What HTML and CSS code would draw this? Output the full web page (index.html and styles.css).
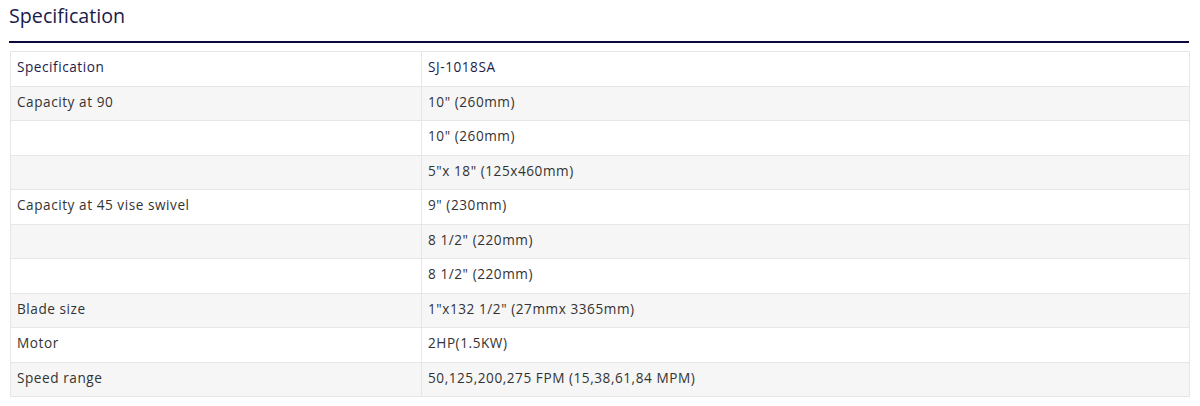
FILE: index.html
```html
<!DOCTYPE html>
<html>
<head>
<meta charset="utf-8">
<link rel="stylesheet" href="styles.css">
</head>
<body>
<div class="spec">
  <h2 class="spec-title">Specification</h2>
  <table class="spec-table">
    <thead>
      <tr><th>Specification</th><th>SJ-1018SA</th></tr>
    </thead>
    <tbody>
      <tr><td>Capacity at 90</td><td>10" (260mm)</td></tr>
      <tr><td></td><td>10" (260mm)</td></tr>
      <tr><td></td><td>5"x 18" (125x460mm)</td></tr>
      <tr><td>Capacity at 45 vise swivel</td><td>9" (230mm)</td></tr>
      <tr><td></td><td>8 1/2" (220mm)</td></tr>
      <tr><td></td><td>8 1/2" (220mm)</td></tr>
      <tr><td>Blade size</td><td>1"x132 1/2" (27mmx 3365mm)</td></tr>
      <tr><td>Motor</td><td>2HP(1.5KW)</td></tr>
      <tr><td>Speed range</td><td>50,125,200,275 FPM (15,38,61,84 MPM)</td></tr>
    </tbody>
  </table>
</div>
</body>
</html>
```
FILE: styles.css
```css
html, body {
  margin: 0;
  padding: 0;
  background: #fff;
}
body {
  font-family: "Open Sans", "DejaVu Sans", sans-serif;
  color: #333;
}
.spec {
  width: 1180px;
  margin-left: 10px;
}
.spec-title {
  margin: 0;
  padding: 3px 0 0 0;
  margin-left: -1px;
  font-size: 19.7px;
  font-weight: 400;
  line-height: 26px;
  color: #1b1b4b;
  border-bottom: 2px solid #0b0b3b;
  padding-bottom: 12px;
  margin-right: 1px;
}
.spec-table {
  margin-top: 8px;
  width: 1180px;
  border-collapse: collapse;
  font-size: 13.6px;
  letter-spacing: 0.55px;
}
.spec-table th,
.spec-table td {
  border: 1px solid #e6e6e6;
  text-align: left;
  font-weight: 400;
  padding: 0 6px 3px;
  height: 30.5px;
  line-height: 18px;
  vertical-align: middle;
}
.spec-table th:first-child,
.spec-table td:first-child {
  width: 398px;
}
.spec-table th {
  color: #1d1d4d;
}
.spec-table tbody tr:nth-child(odd) {
  background: #f6f6f6;
}
```
